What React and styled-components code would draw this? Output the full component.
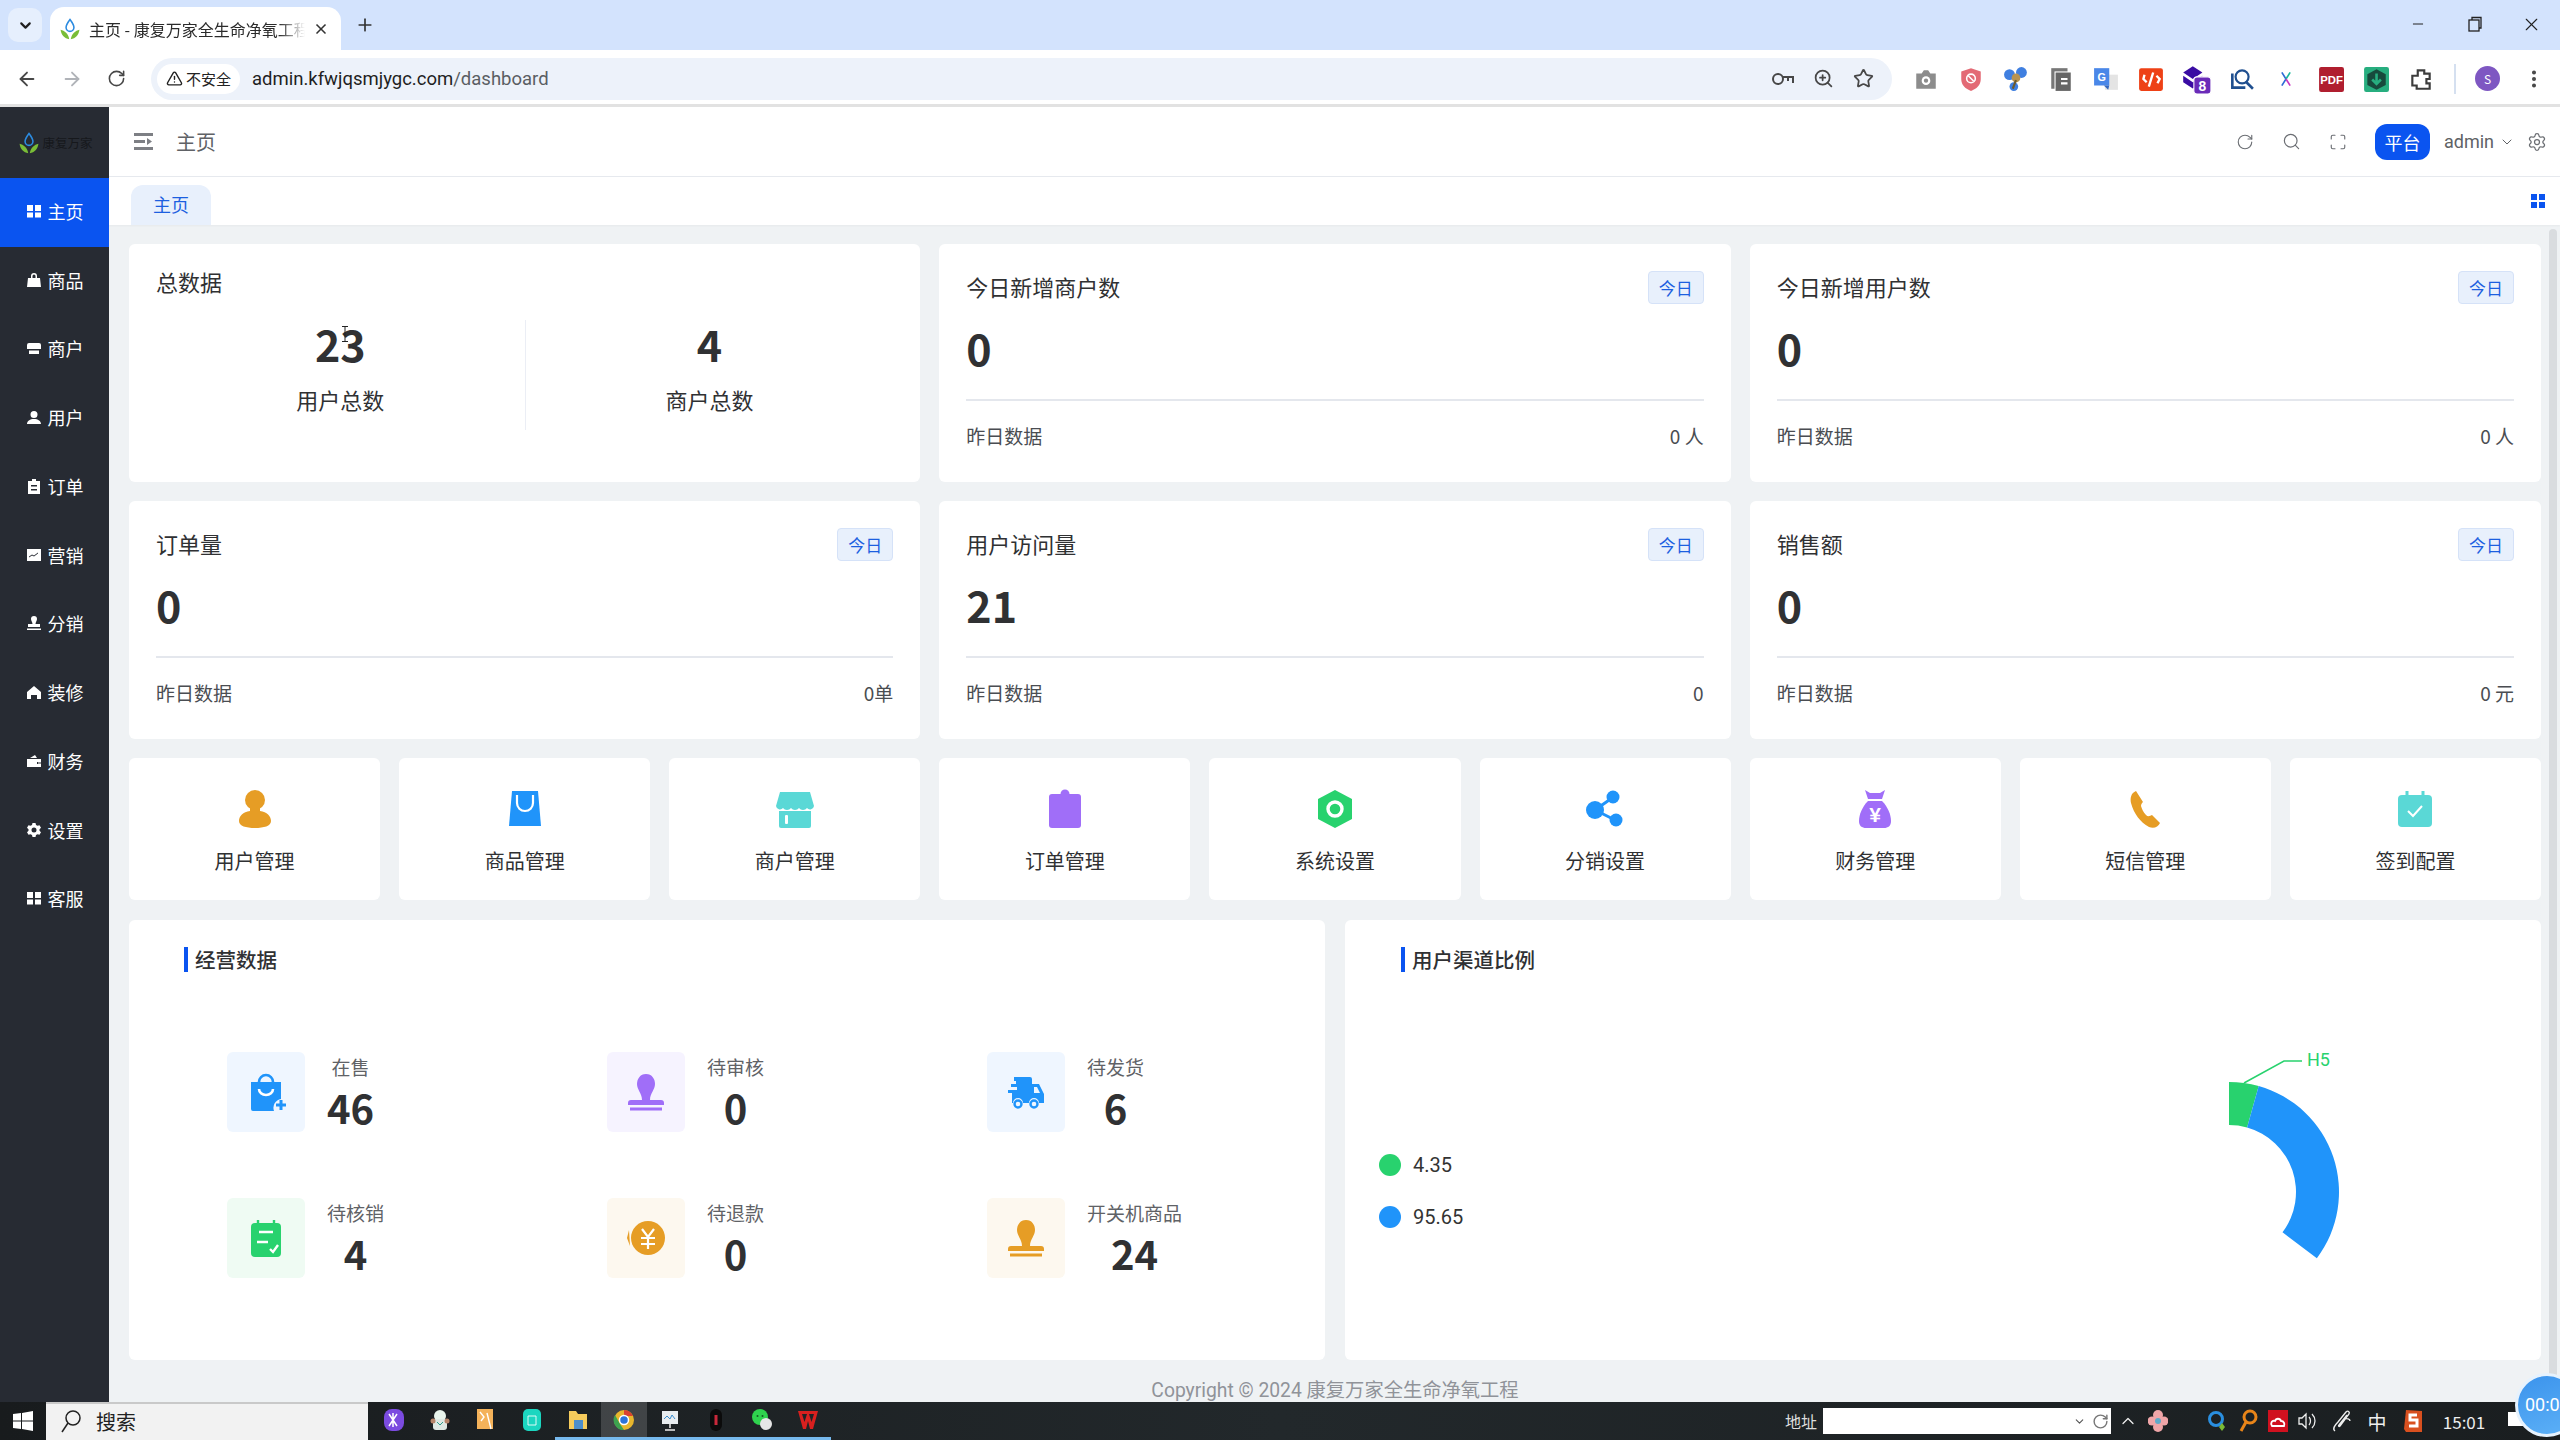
import React from 'react';
import styled, { createGlobalStyle } from 'styled-components';
import { ArrowLeft, ArrowRight, RotateCw, TriangleAlert, ZoomIn, Star, ChevronDown, ChevronUp, X, Plus, Minus, Search, Maximize, Settings, MoreVertical } from 'lucide-react';

const GREEN = '#28d26e';
const BLUE = '#2094fa';
const PURPLE = '#a06ef8';
const ORANGE = '#e69d25';
const TEAL = '#5ad8d6';
const PRIMARY = '#0a54f0';

const GlobalStyle = createGlobalStyle`
    html, body { margin: 0; padding: 0; background: #fff; }
    * { box-sizing: border-box; }
    body { font-family: "Noto Sans CJK SC", "Noto Sans", sans-serif; color: #303133; }
`

// ---- drawn icons ----
const Svg = ({ size = 40, box = 40, children }) => (
    <svg width={size} height={size} viewBox={`0 0 ${box} ${box}`}>{children}</svg>
)

const UserIcon = ({ color = ORANGE, size = 40 }) => (
    <Svg size={size}>
        <circle cx="20" cy="11" r="10" fill={color} />
        <path d="M15 17h10v5c7 1 11 5 11 10 0 5-7 7-16 7S4 37 4 32c0-5 4-9 11-10z" fill={color} />
    </Svg>
)
const BagIcon = () => (
    <Svg>
        <path d="M7 2h26l3 35H4z" fill={BLUE} />
        <path d="M12 6v8a8 8 0 0 0 16 0V6" fill="none" stroke="#fff" strokeWidth="2.2" />
    </Svg>
)
const StoreIcon = () => (
    <Svg>
        <path d="M5 3h30l4 14a4 4 0 0 1-7 2 5 5 0 0 1-8 0 5 5 0 0 1-8 0 5 5 0 0 1-8 0 4 4 0 0 1-7-2z" fill={TEAL} />
        <path d="M4 22h32v15a2 2 0 0 1-2 2H6a2 2 0 0 1-2-2z" fill={TEAL} />
        <rect x="10" y="26" width="3" height="9" rx="1" fill="#fff" />
    </Svg>
)
const ClipIcon = () => (
    <Svg>
        <rect x="4" y="5" width="32" height="34" rx="3" fill={PURPLE} />
        <circle cx="20" cy="5" r="4.5" fill={PURPLE} />
    </Svg>
)
const HexIcon = () => (
    <Svg>
        <polygon points="20,1 37,10 37,30 20,39 3,30 3,10" fill={GREEN} />
        <circle cx="20" cy="20" r="7" fill="none" stroke="#fff" strokeWidth="3.4" />
    </Svg>
)
const ShareIcon = () => (
    <Svg>
        <path d="M10 21L27 9M10 21L30 31" stroke={BLUE} strokeWidth="3" />
        <circle cx="10" cy="21" r="9" fill={BLUE} />
        <circle cx="28" cy="8" r="6.5" fill={BLUE} />
        <circle cx="31" cy="31" r="6.5" fill={BLUE} />
    </Svg>
)
const MoneyIcon = () => (
    <Svg>
        <path d="M10 1l5 3h10l5-3-3 9H13z" fill={PURPLE} />
        <path d="M13 12h14c6 6 9 14 9 20 0 5-3 7-7 7H11c-4 0-7-2-7-7 0-6 3-14 9-20z" fill={PURPLE} />
        <text x="20" y="33" textAnchor="middle" fontSize="21" fontWeight="700" fill="#fff" fontFamily="Liberation Sans">¥</text>
    </Svg>
)
const PhoneIcon = () => (
    <Svg>
        <path d="M11 2C6 4 5 9 6 14c3 11 9 19 18 24 5 2 9 0 11-4l-8-8c-2 1-4 2-6 0-3-3-4-6-5-9 0-2 1-3 2-4z" fill={ORANGE} />
    </Svg>
)
const CheckCalIcon = () => (
    <Svg>
        <rect x="3" y="6" width="34" height="32" rx="4" fill={TEAL} />
        <path d="M12 2v8M28 2v8" stroke={TEAL} strokeWidth="3" />
        <path d="M13 22l5 5 9-10" fill="none" stroke="#fff" strokeWidth="2" />
    </Svg>
)
const BagPlusIcon = () => (
    <Svg>
        <path d="M13 10a7 7 0 0 1 14 0" fill="none" stroke={BLUE} strokeWidth="2.6" />
        <path d="M5 10h30v17a9 9 0 0 0-7 12H7a2 2 0 0 1-2-2z" fill={BLUE} />
        <path d="M13 17a7 6 0 0 0 14 0" fill="none" stroke="#fff" strokeWidth="2.6" />
        <path d="M35 28v10M30 33h10" stroke={BLUE} strokeWidth="3" />
    </Svg>
)
const StampIcon = ({ color }) => (
    <Svg>
        <path d="M20 2c6 0 9 5 9 10 0 6-5 9-5 16h11c2 0 3 1 3 3v2H2v-2c0-2 1-3 3-3h11c0-7-5-10-5-16 0-5 3-10 9-10z" fill={color} />
        <rect x="4" y="35.5" width="32" height="3" fill={color} />
    </Svg>
)
const TruckIcon = () => (
    <Svg>
        <path d="M8 5h16a2 2 0 0 1 2 2v5h7l5 10v9h-5a5 5 0 0 0-10 0h-6a5 5 0 0 0-10 0H6V21H2v-3h9v-3H5v-3h5V9H8z" fill={BLUE} />
        <path d="M28 15v6h6l-3-6z" fill="#eff6ff" />
        <circle cx="12" cy="32" r="3.5" fill="none" stroke={BLUE} strokeWidth="2.4" />
        <circle cx="28" cy="32" r="3.5" fill="none" stroke={BLUE} strokeWidth="2.4" />
    </Svg>
)
const NoteCalIcon = () => (
    <Svg>
        <rect x="5" y="5" width="30" height="34" rx="4" fill={GREEN} />
        <path d="M12 2v7M28 2v7" stroke={GREEN} strokeWidth="2.4" />
        <path d="M13 14h14M11 24h11M24 31l3 3 5-7" fill="none" stroke="#fff" strokeWidth="2.4" />
    </Svg>
)
const RefundIcon = () => (
    <Svg>
        <circle cx="22" cy="20" r="17" fill={ORANGE} />
        <path d="M3 12l-2 8 3 8z" fill={ORANGE} />
        <path d="M16 11l6 8 6-8M22 19v12M15 20h14M15 26h14" fill="none" stroke="#fff" strokeWidth="2.2" />
    </Svg>
)

// ---- sidebar icons ----
const side = (inner) => () => <svg width="16" height="16" viewBox="0 0 16 16" fill="#fff">{inner}</svg>
const SideGrid = side(<path d="M1 2h6v6H1zM9 2h6v6H9zM1 9.500h6v5H1zM9 9.500h6v5H9z" />)
const SideBag = side(<path d="M5 6V4a3 3 0 0 1 6 0v2h3l1 9H1l1-9zM6.500 6h3V4a1.500 1.500 0 0 0-3 0z" fillRule="evenodd" />)
const SideStore = side(<path d="M3 3h10a2 2 0 0 1 2 2v4H1V5a2 2 0 0 1 2-2zM3 10.500h10V14H3z" />)
const SideUser = side(<path d="M8 2a3.500 3.500 0 1 1 0 7 3.500 3.500 0 0 1 0-7zM1 15c0-3 3-5 7-5s7 2 7 5z" />)
const SideOrder = side(<path d="M6 1h4v2h4v13H2V3h4zM5 7v1.500h6V7zM5 11v1.500h6V11z" fillRule="evenodd" />)
const SideChart = side(<path d="M1 2h14v12H1zM3 10.500l3-2 2 1 4-3v-1l-4 3-2-1-3 2z" fillRule="evenodd" />)
const SideStamp = side(<path d="M8 1a3 3 0 0 1 3 3c0 2-1.500 3-1.500 5H14v3H2V9h4.500C6.500 7 5 6 5 4a3 3 0 0 1 3-3zM1 13.500h14V15H1z" />)
const SideHome = side(<path d="M8 2l7 6v7h-4v-4H5v4H1V8z" />)
const SideWallet = side(<path d="M1 6h14v3h-4v2h4v3H1zM4 5l5-3 2 3zM12 9.500h3v1h-3z" />)
const SideGear = side(<path d="M6.500 1h3l.5 2 1.500.8 2-.6 1.500 2.600-1.500 1.400v1.600l1.500 1.400-1.500 2.600-2-.6-1.500.8-.5 2h-3l-.5-2-1.500-.8-2 .6L1 10.200l1.500-1.400V7.200L1 5.800l1.500-2.600 2 .6L6 3zM8 5.500a2.500 2.500 0 1 0 0 5 2.500 2.500 0 0 0 0-5z" fillRule="evenodd" />)

const Logo = ({ size = 28 }) => (
    <svg width={size} height={size} viewBox="0 0 28 28">
        <path d="M14 2c3 4 5 7 5 10a5 5 0 0 1-10 0c0-3 2-6 5-10z" fill="none" stroke="#2c8be0" strokeWidth="2" />
        <path d="M13 27C7 26 3 22 2 15c5 1 10 5 11 12z" fill="#79bd37" />
        <path d="M15 27c6-1 10-5 11-12-5 1-10 5-11 12z" fill="#79bd37" />
    </svg>
)

// ---- chrome ----
const Page = styled.div`
    position: relative;
    width: 2560px;
    height: 1440px;
    overflow: hidden;
    display: flex;
    flex-direction: column;
`
const TabStrip = styled.div`
    height: 50px;
    flex: none;
    background: #d3e3fd;
    display: flex;
    padding-left: 8px;
`
const TabMenu = styled.div`
    width: 34px;
    height: 34px;
    margin: 8px 8px 0 0;
    border-radius: 10px;
    background: #e6effd;
    display: flex;
    align-items: center;
    justify-content: center;
    color: #1f1f1f;
`
const Tab = styled.div`
    width: 291px;
    margin-top: 7px;
    background: #fff;
    border-radius: 14px 14px 0 0;
    display: flex;
    align-items: center;
    padding: 0 12px 0 9px;
    gap: 8px;
`
const TabTitle = styled.div`
    flex: 1;
    font-size: 16px;
    color: #2b2b2b;
    white-space: nowrap;
    overflow: hidden;
    -webkit-mask-image: linear-gradient(90deg, #000 88%, transparent);
    mask-image: linear-gradient(90deg, #000 88%, transparent);
`
const NewTab = styled.div`
    width: 48px;
    display: flex;
    align-items: center;
    justify-content: center;
    color: #333;
`
const WindowControls = styled.div`
    margin-left: auto;
    display: flex;
`
const WinButton = styled.div`
    width: 57px;
    height: 48px;
    display: flex;
    align-items: center;
    justify-content: center;
    color: #222;
`
const Toolbar = styled.div`
    height: 57px;
    flex: none;
    background: #fff;
    border-bottom: 3px solid #e2e2e2;
    display: flex;
    align-items: center;
    padding: 3px 0 0 4px;
    color: #474747;
`
const Slot = styled.div`
    width: ${p => p.$w || 45}px;
    flex: none;
    display: flex;
    align-items: center;
    justify-content: center;
    color: ${p => p.$color || 'inherit'};
`
const MenuSlot = styled(Slot)`
    width: 60px;
    padding-left: 7px;
`
const Omnibox = styled.div`
    width: 1741px;
    height: 42px;
    flex: none;
    margin: 0 11px 0 12px;
    border-radius: 21px;
    background: #edf2fa;
    display: flex;
    align-items: center;
    padding: 0 9px 0 6px;
`
const SecurityChip = styled.div`
    width: 83px;
    height: 30px;
    border-radius: 15px;
    background: #fff;
    display: flex;
    align-items: center;
    justify-content: center;
    gap: 3px;
    font-size: 15px;
    color: #222;
    flex: none;
`
const Url = styled.div`
    margin-left: 12px;
    flex: 1;
    font-family: Roboto, "Liberation Sans", sans-serif;
    font-size: 18.500px;
    color: #1f1f1f;
    span { color: #5a5e63; }
`
const ToolDivider = styled.div`
    width: 2px;
    height: 30px;
    background: #d5e0f0;
    margin: 0 19px 0 11px;
    flex: none;
`
const Avatar = styled.div`
    width: 25px;
    height: 25px;
    border-radius: 50%;
    background: #7e57c2;
    color: #fff;
    font-size: 12px;
    display: flex;
    align-items: center;
    justify-content: center;
    flex: none;
`

// extension icons
const ext = (inner) => <svg width="26" height="26" viewBox="0 0 24 24">{inner}</svg>
const Extensions = [
    ext(<><path d="M3 7h5l2-3h4l2 3h5v14H3z" fill="#8c8c8c" /><circle cx="12" cy="13.500" r="4" fill="#fff" /><circle cx="12" cy="13.500" r="2" fill="#8c8c8c" /></>),
    ext(<><path d="M12 2l9 3v7c0 6-4 9-9 11-5-2-9-5-9-11V5z" fill="#e36a75" /><circle cx="12" cy="11.500" r="4" fill="none" stroke="#fff" strokeWidth="1.400" /><path d="M9.500 9l5 5" stroke="#fff" strokeWidth="1.400" /></>),
    ext(<><circle cx="6" cy="8" r="5" fill="#3f7fe0" /><circle cx="17" cy="6" r="5" fill="#3f7fe0" /><circle cx="10" cy="19" r="4" fill="#3f7fe0" /><circle cx="12" cy="11" r="4" fill="#b89350" /><path d="M12 13l-3 8" stroke="#6d5a2e" strokeWidth="2" /></>),
    ext(<><rect x="3" y="2" width="15" height="19" fill="#777" /><rect x="6" y="5" width="15" height="18" fill="#fff" /><rect x="7" y="6" width="14" height="17" fill="#666" /><path d="M12 12h6M12 16h6" stroke="#fff" strokeWidth="2" /></>),
    ext(<><rect x="11" y="8" width="12" height="14" fill="#e4e4e4" /><path d="M1 2h14v16H1z" fill="#4a87e8" /><path d="M10 18l4 4 1-4z" fill="#3367c0" /><text x="8" y="14" textAnchor="middle" fontSize="10" fontWeight="700" fill="#fff" fontFamily="Liberation Sans">G</text></>),
    ext(<><rect x="1" y="2" width="22" height="21" rx="2" fill="#ee4116" /><path d="M6 8l-1 4 3 3M18 16l2-4-3-3M14 6l-4 13" fill="none" stroke="#fff" strokeWidth="2.200" /></>),
    <svg width="32" height="32" viewBox="0 0 30 30"><path d="M12 3l9 6-9 6-9-6z" fill="#3a0ca3" /><path d="M3 12l9 6 9-6v6l-9 6-9-6z" fill="#3a0ca3" /><rect x="13" y="13" width="16" height="16" rx="3" fill="#6a2bb8" stroke="#fff" /><text x="21" y="26" textAnchor="middle" fontSize="13" fontWeight="700" fill="#fff" fontFamily="Liberation Sans">8</text></svg>,
    ext(<><circle cx="13" cy="10" r="6" fill="none" stroke="#1f4f8f" strokeWidth="2" /><path d="M17 15l6 6" stroke="#1f4f8f" strokeWidth="2.400" /><path d="M4 7v13h12" fill="none" stroke="#1f4f8f" strokeWidth="2.400" /></>),
    <svg width="20" height="20" viewBox="0 0 24 24"><path d="M7 4l5 8-5 8" fill="none" stroke="#2e6bd6" strokeWidth="2" /><path d="M17 4l-5 8" fill="none" stroke="#18b99c" strokeWidth="2" /><path d="M12 12l5 8" fill="none" stroke="#c935c0" strokeWidth="2" /></svg>,
    ext(<><rect x="1" y="1" width="23" height="23" rx="2" fill="#b01e2f" /><text x="12.500" y="16.500" textAnchor="middle" fontSize="10.500" fontWeight="700" fill="#fff" fontFamily="Liberation Sans">PDF</text></>),
    ext(<><rect x="1" y="1" width="23" height="23" rx="2" fill="#27ae7f" /><polygon points="12.500,3 21,7.500 21,17.500 12.500,22 4,17.500 4,7.500" fill="#174a3c" /><path d="M12.500 7v9M8.500 12.500l4 4 4-4" fill="none" stroke="#27ae7f" strokeWidth="2.400" /></>),
    ext(<path d="M9 4h6v3h5v5h-3v4h3v5H8v-3H4v-9h5z" fill="none" stroke="#3c3c3c" strokeWidth="2" />),
]

// ---- app layout ----
const Body = styled.div`
    flex: 1;
    display: flex;
    min-height: 0;
`
const Sidebar = styled.nav`
    width: 109px;
    flex: none;
    background: #272b33;
`
const LogoRow = styled.div`
    height: 71px;
    display: flex;
    align-items: center;
    justify-content: center;
    gap: 2px;
    padding-left: 2px;
`
const LogoText = styled.div`
    font-size: 12.500px;
    line-height: 14px;
    color: #16181c;
    white-space: nowrap;
`
const NavItem = styled.div`
    height: 68.750px;
    padding-bottom: 3px;
    display: flex;
    align-items: center;
    justify-content: center;
    gap: 6px;
    font-size: 18px;
    color: #fff;
    background: ${p => (p.$active ? PRIMARY : 'transparent')};
`
const Main = styled.div`
    flex: 1;
    min-width: 0;
    display: flex;
    flex-direction: column;
`
const Header = styled.header`
    height: 70px;
    flex: none;
    display: flex;
    align-items: center;
    background: #fff;
    border-bottom: 1px solid #e6e9ee;
    padding: 0 13px 0 25px;
`
const Crumb = styled.div`
    margin-left: 23px;
    font-size: 20px;
    color: #606266;
`
const HeadTools = styled.div`
    margin-left: auto;
    display: flex;
    align-items: center;
    color: #6b6e73;
`
const HeadIcon = styled.div`
    width: 46.500px;
    display: flex;
    justify-content: center;
`
const PlatformButton = styled.button`
    width: 55px;
    height: 36px;
    margin-left: 14px;
    border: 0;
    border-radius: 12px;
    background: ${PRIMARY};
    color: #fff;
    font-family: inherit;
    font-size: 18px;
    padding: 0;
`
const AdminName = styled.div`
    margin-left: 14px;
    display: flex;
    align-items: center;
    gap: 5px;
    font-family: Roboto, "Liberation Sans", sans-serif;
    font-size: 18px;
    color: #606266;
`
const GearBox = styled.div`
    margin-left: 12px;
    display: flex;
`
const TabsBar = styled.div`
    height: 48px;
    flex: none;
    background: #fff;
    display: flex;
    align-items: flex-end;
    justify-content: space-between;
    padding: 0 15px 0 22px;
    box-shadow: 0 1px 2px rgba(0, 0, 0, 0.04);
    z-index: 1;
`
const PageTab = styled.div`
    width: 80px;
    height: 40px;
    padding-bottom: 3px;
    border-radius: 12px 12px 0 0;
    background: #e8f0fc;
    color: #1c5fe0;
    font-size: 18px;
    display: flex;
    align-items: center;
    justify-content: center;
`
const TabGrid = styled.svg`
    align-self: center;
`
const Content = styled.main`
    position: relative;
    flex: 1;
    min-height: 0;
    background: #eff2f4;
    padding: 19px 19px 0 20px;
    display: flex;
    flex-direction: column;
`
const ScrollThumb = styled.div`
    position: absolute;
    right: 3px;
    top: 4px;
    bottom: 6px;
    width: 8px;
    border-radius: 4px;
    background: #d9dcdf;
`
const Grid3 = styled.div`
    display: grid;
    grid-template-columns: repeat(3, minmax(0, 1fr));
    grid-auto-rows: 238px;
    gap: 19px;
`
const Card = styled.section`
    background: #fff;
    border-radius: 6px;
    padding: 27px;
`
const CardHead = styled.div`
    height: 33px;
    display: flex;
    align-items: center;
    justify-content: space-between;
`
const CardTitle = styled.div`
    font-size: 22px;
    padding-bottom: 4px;
    color: #303133;
`
const TodayTag = styled.div`
    width: 56px;
    height: 33px;
    border: 1px solid #d5e2f8;
    border-radius: 4px;
    background: #e8f0fc;
    color: #1c5fe0;
    font-size: 17px;
    display: flex;
    align-items: center;
    justify-content: center;
`
const BigNumber = styled.div`
    margin-top: 18px;
    font-size: 43px;
    line-height: 50px;
    font-weight: 700;
    color: #303133;
`
const CardLine = styled.div`
    margin-top: 27px;
    height: 2px;
    background: #e4e7ed;
`
const CardFoot = styled.div`
    margin-top: 21px;
    display: flex;
    justify-content: space-between;
    font-size: 19px;
    line-height: 28px;
    color: #4a4d52;
`
const TotalTitle = styled.div`
    margin-top: -2px;
    font-size: 22px;
    line-height: 24px;
    color: #303133;
`
const TotalRow = styled.div`
    margin-top: 27px;
    height: 110px;
    display: grid;
    grid-template-columns: 1fr 1fr;
`
const TotalCell = styled.div`
    text-align: center;
    & + & { border-left: 1px solid #ebeef5; }
`
const TotalNumber = styled.div`
    margin-top: -2px;
    font-size: 43px;
    line-height: 50px;
    font-weight: 700;
    color: #303133;
`
const TotalLabel = styled.div`
    margin-top: 16px;
    font-size: 22px;
    line-height: 30px;
    color: #303133;
`
const Shortcuts = styled.div`
    margin-top: 19px;
    display: grid;
    grid-template-columns: repeat(9, minmax(0, 1fr));
    gap: 19px;
`
const Shortcut = styled.div`
    height: 142px;
    background: #fff;
    border-radius: 6px;
    padding-top: 31px;
    display: flex;
    flex-direction: column;
    align-items: center;
    gap: 17px;
    font-size: 20px;
    line-height: 30px;
    color: #303133;
    svg { display: block; }
`
const Panels = styled.div`
    margin-top: 20px;
    display: grid;
    grid-template-columns: repeat(2, minmax(0, 1fr));
    gap: 20px;
`
const Panel = styled.section`
    height: 440px;
    background: #fff;
    border-radius: 6px;
    padding: 27px 0 0 ${p => p.$pad}px;
`
const PanelTitle = styled.div`
    height: 25px;
    border-left: 4px solid ${PRIMARY};
    padding-left: 7px;
    font-size: 20.500px;
    line-height: 25px;
    font-weight: 500;
    color: #303133;
`
const StatGrid = styled.div`
    margin: 80px 0 0 43px;
    display: grid;
    grid-template-columns: repeat(3, 380px);
    row-gap: 66px;
`
const Stat = styled.div`
    display: flex;
    gap: 22px;
`
const StatIcon = styled.div`
    width: 78px;
    height: 80px;
    border-radius: 6px;
    background: ${p => p.$bg};
    display: flex;
    align-items: center;
    justify-content: center;
`
const StatText = styled.div`
    display: flex;
    flex-direction: column;
    align-items: center;
    padding-top: 1px;
`
const StatLabel = styled.div`
    font-size: 19px;
    line-height: 28px;
    color: #606266;
`
const StatValue = styled.div`
    margin-top: 2px;
    font-size: 40px;
    line-height: 48px;
    font-weight: 700;
    color: #303133;
`
const ChartRow = styled.div`
    display: flex;
`
const Legend = styled.div`
    margin-top: 178px;
    margin-left: -22px;
    display: flex;
    flex-direction: column;
    gap: 22px;
`
const LegendItem = styled.div`
    height: 30px;
    display: flex;
    align-items: center;
    gap: 12px;
    font-family: Roboto, "Liberation Sans", sans-serif;
    font-size: 20px;
    color: #333;
    &::before {
        content: "";
        width: 22px;
        height: 22px;
        border-radius: 50%;
        background: ${p => p.$color};
    }
`
const Chart = styled.svg`
    margin: 78px 196px 0 auto;
    flex: none;
`
const Copyright = styled.div`
    margin-top: 19px;
    text-align: center;
    font-size: 19.300px;
    line-height: 24px;
    color: #909399;
    font-family: Roboto, "Noto Sans CJK SC", sans-serif;
`

// ---- taskbar ----
const Taskbar = styled.footer`
    height: 38px;
    flex: none;
    background: linear-gradient(90deg, #181b1d, #22282b 50%, #1a1e20);
    display: flex;
    align-items: center;
    color: #eee;
`
const StartSlot = styled.div`
    width: 46px;
    display: flex;
    justify-content: center;
`
const TaskSearch = styled.div`
    width: 322px;
    height: 38px;
    padding-bottom: 2px;
    background: #f2f2f2;
    border-top: 2px solid #c9c9c9;
    display: flex;
    align-items: center;
    gap: 14px;
    padding-left: 14px;
    font-size: 20px;
    color: #222;
    margin-right: 3px;
`
const TaskApp = styled.div`
    width: 46px;
    height: 38px;
    flex: none;
    display: flex;
    align-items: center;
    justify-content: center;
    border-bottom: 3px solid ${p => (p.$running ? '#76b9ed' : 'transparent')};
    background: ${p => (p.$current ? 'rgba(255,255,255,0.16)' : 'transparent')};
`
const AddressLabel = styled.div`
    margin-left: auto;
    font-size: 16px;
    color: #ddd;
    margin-right: 6px;
`
const AddressInput = styled.div`
    width: 288px;
    height: 26px;
    background: #fff;
    display: flex;
    align-items: center;
    justify-content: flex-end;
    color: #555;
    gap: 6px;
    padding-right: 2px;
`
const TraySlot = styled.div`
    width: ${p => p.$w}px;
    margin-left: ${p => p.$ml || 0}px;
    flex: none;
    display: flex;
    align-items: center;
    justify-content: center;
    font-size: ${p => p.$fs || 16}px;
    color: #eee;
`
const RecordBubble = styled.div`
    position: absolute;
    left: 2515px;
    top: 1373px;
    width: 64px;
    height: 64px;
    border-radius: 50%;
    border: 3px solid #e6f2fd;
    background: linear-gradient(160deg, #3b93ec, #5db1f7);
    color: #fff;
    font-family: Roboto, sans-serif;
    font-size: 18px;
    line-height: 58px;
    padding-left: 7px;
    white-space: nowrap;
`
const TextCursor = styled.svg`
    position: absolute;
    left: 341px;
    top: 326px;
`

const task = (inner) => <svg width="22" height="24" viewBox="0 0 22 24">{inner}</svg>
const TaskApps = [
    { icon: task(<><rect x="1" y="1" width="20" height="22" rx="8" fill="#7b4be0" /><path d="M6 6l8 12M14 6l-8 12M10 5v14" stroke="#fff" strokeWidth="1.500" /></>) },
    { icon: task(<><circle cx="11" cy="8" r="6" fill="#e8f4ec" /><rect x="4" y="11" width="14" height="11" rx="3" fill="#dfe9e4" /><circle cx="4" cy="13" r="2.500" fill="#b7856a" /><circle cx="18" cy="13" r="2.500" fill="#b7856a" /><path d="M8 14l3 3 3-3" stroke="#2f9e8a" fill="none" /></>) },
    { icon: task(<><rect x="2" y="1" width="16" height="20" fill="#f4b25a" /><path d="M5 4l4 5-3 4M12 5l4 16" stroke="#fff" strokeWidth="1.400" fill="none" /></>) },
    { icon: task(<><rect x="2" y="1" width="18" height="22" rx="5" fill="#1bd6c0" /><path d="M7 8h8v9H7z" fill="none" stroke="#dffaf6" /></>) },
    { icon: task(<><path d="M2 3h7l2 3h9v15H2z" fill="#f6cc5c" /><rect x="7" y="12" width="9" height="9" fill="#4d8ecb" /></>), running: true },
    { icon: task(<><circle cx="11" cy="12" r="10" fill="#e8b62d" /><path d="M11 2a10 10 0 0 1 9 6H11z" fill="#d9432f" /><path d="M2 7l5 9 4 6a10 10 0 0 1-9-15z" fill="#3da24f" /><circle cx="11" cy="12" r="4.500" fill="#2c73d8" stroke="#fff" strokeWidth="1.500" /></>), running: true, current: true },
    { icon: task(<><rect x="3" y="3" width="16" height="13" fill="#e9edf0" /><path d="M5 11l3-3 3 3 2-4 3 4" stroke="#3a8ecf" fill="none" /><path d="M11 16v4M6 22h10" stroke="#bbb" strokeWidth="2" /></>), running: true },
    { icon: task(<><rect x="5" y="1" width="12" height="22" rx="6" fill="#0b0b0b" /><rect x="9.500" y="7" width="3" height="10" fill="#c9283a" /></>), running: true },
    { icon: task(<><circle cx="9" cy="9" r="8" fill="#2fd34e" /><circle cx="15" cy="16" r="6" fill="#e6e6e6" /><circle cx="6.500" cy="8" r="1" fill="#135c22" /><circle cx="11.500" cy="8" r="1" fill="#135c22" /></>), running: true },
    { icon: task(<path d="M1 3h20l-5 18h-3l-2-8-2 8H6zM5 6l2.500 8L10 6h2l2.500 8L17 6z" fill="#d8201f" fillRule="evenodd" />), running: true },
]

const CARDS = [
    { title: '今日新增商户数', value: '0', foot: '0 人' },
    { title: '今日新增用户数', value: '0', foot: '0 人' },
    { title: '订单量', value: '0', foot: '0单' },
    { title: '用户访问量', value: '21', foot: '0' },
    { title: '销售额', value: '0', foot: '0 元' },
]

const SHORTCUTS = [
    ['用户管理', <UserIcon />], ['商品管理', <BagIcon />], ['商户管理', <StoreIcon />],
    ['订单管理', <ClipIcon />], ['系统设置', <HexIcon />], ['分销设置', <ShareIcon />],
    ['财务管理', <MoneyIcon />], ['短信管理', <PhoneIcon />], ['签到配置', <CheckCalIcon />],
]

const STATS = [
    ['在售', '46', '#eff6ff', <BagPlusIcon />],
    ['待审核', '0', '#f6f3ff', <StampIcon color={PURPLE} />],
    ['待发货', '6', '#eff6ff', <TruckIcon />],
    ['待核销', '4', '#effbf3', <NoteCalIcon />],
    ['待退款', '0', '#fdf8ef', <RefundIcon />],
    ['开关机商品', '24', '#fdf8ef', <StampIcon color={ORANGE} />],
]

const NAV = [
    ['主页', SideGrid], ['商品', SideBag], ['商户', SideStore], ['用户', SideUser], ['订单', SideOrder],
    ['营销', SideChart], ['分销', SideStamp], ['装修', SideHome], ['财务', SideWallet], ['设置', SideGear], ['客服', SideGrid],
]

// ring slice, angles in degrees clockwise from 12 o'clock
const slice = (cx, cy, r0, r1, a0, a1) => {
    const pt = (r, a) => {
        const t = (a * Math.PI) / 180;
        return `${(cx + r * Math.sin(t)).toFixed(2)} ${(cy - r * Math.cos(t)).toFixed(2)}`;
    };
    return `M${pt(r1, a0)}A${r1} ${r1} 0 0 1 ${pt(r1, a1)}L${pt(r0, a1)}A${r0} ${r0} 0 0 0 ${pt(r0, a0)}Z`;
}

const DataCard = ({ title, value, foot }) => (
    <Card>
        <CardHead>
            <CardTitle>{title}</CardTitle>
            <TodayTag>今日</TodayTag>
        </CardHead>
        <BigNumber>{value}</BigNumber>
        <CardLine />
        <CardFoot>
            <span>昨日数据</span>
            <span>{foot}</span>
        </CardFoot>
    </Card>
)

export default function App() {
    return (
        <Page>
            <GlobalStyle />
            <TabStrip>
                <TabMenu><ChevronDown size={17} strokeWidth={3} /></TabMenu>
                <Tab>
                    <Logo size={22} />
                    <TabTitle>主页 - 康复万家全生命净氧工程</TabTitle>
                    <X size={16} strokeWidth={2.5} color="#333" />
                </Tab>
                <NewTab><Plus size={20} strokeWidth={2} /></NewTab>
                <WindowControls>
                    <WinButton><Minus size={16} strokeWidth={1.5} /></WinButton>
                    <WinButton>
                        <svg width="16" height="16" viewBox="0 0 16 16" fill="none" stroke="#222" strokeWidth="1.300"><rect x="2" y="4" width="10" height="11" /><path d="M5 4V1.500h9V12h-2" /></svg>
                    </WinButton>
                    <WinButton><X size={21} strokeWidth={1.3} /></WinButton>
                </WindowControls>
            </TabStrip>
            <Toolbar>
                <Slot><ArrowLeft size={22} /></Slot>
                <Slot $color="#b0b3b8"><ArrowRight size={22} /></Slot>
                <Slot><RotateCw size={19} /></Slot>
                <Omnibox>
                    <SecurityChip><TriangleAlert size={17} />不安全</SecurityChip>
                    <Url>admin.kfwjqsmjygc.com<span>/dashboard</span></Url>
                    <Slot $w={40}>
                        <svg width="24" height="20" viewBox="0 0 24 20" fill="none" stroke="#474747" strokeWidth="2"><circle cx="7" cy="10" r="5" /><path d="M12 8h10v6M17 8v4" /></svg>
                    </Slot>
                    <Slot $w={40}><ZoomIn size={21} /></Slot>
                    <Slot $w={40}><Star size={21} strokeWidth={2} /></Slot>
                </Omnibox>
                {Extensions.map((icon, i) => <Slot key={i}>{icon}</Slot>)}
                <ToolDivider />
                <Avatar>S</Avatar>
                <MenuSlot><MoreVertical size={22} strokeWidth={2.4} /></MenuSlot>
            </Toolbar>
            <Body>
                <Sidebar>
                    <LogoRow>
                        <Logo size={22} />
                        <LogoText>康复万家</LogoText>
                    </LogoRow>
                    {NAV.map(([label, Icon], i) => (
                        <NavItem key={label} $active={i === 0}><Icon />{label}</NavItem>
                    ))}
                </Sidebar>
                <Main>
                    <Header>
                        <svg width="19" height="17" viewBox="0 0 19 17" fill="#7d7f84"><path d="M0 0h19v3H0zM0 14h19v3H0zM0 7h11v3H0zM13 5l5 3.500-5 3.500z" /></svg>
                        <Crumb>主页</Crumb>
                        <HeadTools>
                            <HeadIcon><RotateCw size={18} strokeWidth={1.5} /></HeadIcon>
                            <HeadIcon><Search size={19} strokeWidth={1.5} /></HeadIcon>
                            <HeadIcon><Maximize size={18} strokeWidth={1.5} /></HeadIcon>
                            <PlatformButton>平台</PlatformButton>
                            <AdminName>admin<ChevronDown size={16} strokeWidth={1.5} /></AdminName>
                            <GearBox><Settings size={20} strokeWidth={1.5} /></GearBox>
                        </HeadTools>
                    </Header>
                    <TabsBar>
                        <PageTab>主页</PageTab>
                        <TabGrid width="14" height="14" viewBox="0 0 14 14" fill={PRIMARY}>
                            <path d="M0 0h6v6H0zM8 0h6v6H8zM0 8h6v6H0zM8 8h6v6H8z" />
                        </TabGrid>
                    </TabsBar>
                    <Content>
                        <ScrollThumb />
                        <Grid3>
                            <Card>
                                <TotalTitle>总数据</TotalTitle>
                                <TotalRow>
                                    <TotalCell>
                                        <TotalNumber>23</TotalNumber>
                                        <TotalLabel>用户总数</TotalLabel>
                                    </TotalCell>
                                    <TotalCell>
                                        <TotalNumber>4</TotalNumber>
                                        <TotalLabel>商户总数</TotalLabel>
                                    </TotalCell>
                                </TotalRow>
                            </Card>
                            {CARDS.map(c => <DataCard key={c.title} {...c} />)}
                        </Grid3>
                        <Shortcuts>
                            {SHORTCUTS.map(([label, icon]) => (
                                <Shortcut key={label}>{icon}{label}</Shortcut>
                            ))}
                        </Shortcuts>
                        <Panels>
                            <Panel $pad={55}>
                                <PanelTitle>经营数据</PanelTitle>
                                <StatGrid>
                                    {STATS.map(([label, value, bg, icon]) => (
                                        <Stat key={label}>
                                            <StatIcon $bg={bg}>{icon}</StatIcon>
                                            <StatText>
                                                <StatLabel>{label}</StatLabel>
                                                <StatValue>{value}</StatValue>
                                            </StatText>
                                        </Stat>
                                    ))}
                                </StatGrid>
                            </Panel>
                            <Panel $pad={56}>
                                <PanelTitle>用户渠道比例</PanelTitle>
                                <ChartRow>
                                    <Legend>
                                        <LegendItem $color={GREEN}>4.35</LegendItem>
                                        <LegendItem $color={BLUE}>95.65</LegendItem>
                                    </Legend>
                                    <Chart width="120" height="220" viewBox="0 0 120 220">
                                        <path d={slice(4, 142, 67, 110, 0, 15.66)} fill={GREEN} />
                                        <path d={slice(4, 142, 67, 110, 15.66, 127)} fill={BLUE} />
                                        <path d="M19 33L59 11H77" fill="none" stroke={GREEN} strokeWidth="1.500" />
                                        <text x="82" y="16" fontSize="18" fill={GREEN} fontFamily="Roboto">H5</text>
                                    </Chart>
                                </ChartRow>
                            </Panel>
                        </Panels>
                        <Copyright>Copyright © 2024 康复万家全生命净氧工程</Copyright>
                    </Content>
                </Main>
            </Body>
            <Taskbar>
                <StartSlot>
                    <svg width="20" height="20" viewBox="0 0 20 20" fill="#fff"><path d="M0 3l8-1v7.500H0zM9 2l11-2v9.500H9zM0 10.500h8V18l-8-1zM9 10.500h11V20L9 18z" /></svg>
                </StartSlot>
                <TaskSearch>
                    <svg width="22" height="24" viewBox="0 0 22 24" fill="none" stroke="#222" strokeWidth="1.500"><circle cx="13" cy="9" r="7" /><path d="M8 14L2 23" /></svg>
                    搜索
                </TaskSearch>
                {TaskApps.map((a, i) => <TaskApp key={i} $running={a.running} $current={a.current}>{a.icon}</TaskApp>)}
                <AddressLabel>地址</AddressLabel>
                <AddressInput>
                    <ChevronDown size={13} />
                    <RotateCw size={17} color="#777" />
                </AddressInput>
                <TraySlot $w={34}><ChevronUp size={20} strokeWidth={1.5} /></TraySlot>
                <TraySlot $w={26}>
                    <svg width="20" height="22" viewBox="0 0 20 22"><circle cx="10" cy="5" r="5" fill="#efa5a8" /><circle cx="4" cy="11" r="4.500" fill="#efa5a8" /><circle cx="16" cy="11" r="4.500" fill="#efa5a8" /><circle cx="10" cy="17" r="5" fill="#efa5a8" /><circle cx="10" cy="11" r="3" fill="#5fa9c9" /></svg>
                </TraySlot>
                <TraySlot $w={30} $ml={32}>
                    <svg width="22" height="24" viewBox="0 0 22 24" fill="none"><circle cx="9" cy="10" r="6.500" stroke="#2a8fe0" strokeWidth="3" /><path d="M15 14l3 4-3 4-3-4z" fill="#7cba35" /></svg>
                </TraySlot>
                <TraySlot $w={30}>
                    <svg width="20" height="24" viewBox="0 0 20 24" fill="none" stroke="#e98519" strokeWidth="3"><circle cx="12" cy="8" r="6" /><path d="M8 13l-5 9" /></svg>
                </TraySlot>
                <TraySlot $w={30}>
                    <svg width="20" height="22" viewBox="0 0 20 22"><rect width="20" height="22" fill="#d0111f" /><path d="M4 16c-2-3 0-6 3-5 1-3 5-3 6 0 3 0 4 3 3 5z" fill="none" stroke="#fff" strokeWidth="1.800" /></svg>
                </TraySlot>
                <TraySlot $w={30}>
                    <svg width="22" height="22" viewBox="0 0 22 22" fill="none" stroke="#eee" strokeWidth="1.300"><path d="M2 8h3l4-4v14l-4-4H2zM12 7c2 2 2 6 0 8M15 4c4 4 4 10 0 14" /></svg>
                </TraySlot>
                <TraySlot $w={40}>
                    <svg width="22" height="24" viewBox="0 0 22 24" fill="none" stroke="#eee" strokeWidth="1.400"><path d="M3 22c-3-2 0-6 3-9l8-10c2-2 4 0 3 2l-9 12c-1 1-2 0-1-1l8-10M12 10c3-1 6 0 6 2" /></svg>
                </TraySlot>
                <TraySlot $w={28} $fs={19}>中</TraySlot>
                <TraySlot $w={44}>
                    <svg width="20" height="24" viewBox="0 0 20 24"><path d="M3 1l16 1v21l-16 0-2-3z" fill="#d9501f" /><path d="M14 6H7v5h7v6H6" fill="none" stroke="#fff" strokeWidth="3" /></svg>
                </TraySlot>
                <TraySlot $w={58} $fs={17}>15:01</TraySlot>
                <TraySlot $w={48}>
                    <svg width="18" height="18" viewBox="0 0 18 18" fill="#fff"><path d="M0 0h18v14H0z" /></svg>
                </TraySlot>
                <TraySlot $w={19} />
            </Taskbar>
            <RecordBubble>00:04</RecordBubble>
            <TextCursor width="8" height="16" viewBox="0 0 8 16" fill="none" stroke="#222"><path d="M1 .5h6M4 .5v15M1 15.500h6" /></TextCursor>
        </Page>
    )
}
